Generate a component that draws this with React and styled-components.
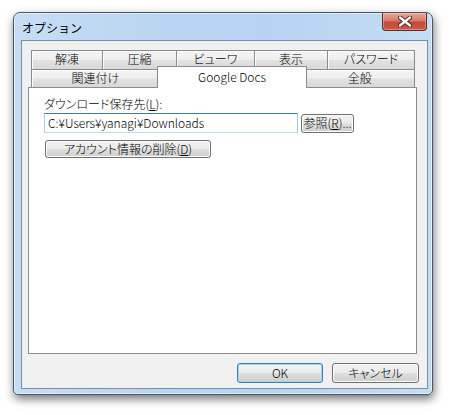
import React from "react";
import styled, { createGlobalStyle } from "styled-components";

const JP = `"Noto Sans CJK JP", sans-serif`;

const GlobalStyle = createGlobalStyle`
  html, body {
    margin: 0;
    background: #ffffff;
    font-family: ${JP};
    font-size: 12px;
  }
`;

const Page = styled.div`
  padding: 12px 0 0 13px;
  height: 415px;
  box-sizing: border-box;
`;

// aero glass frame
const Window = styled.div`
  width: 420px;
  height: 383px;
  box-sizing: border-box;
  border: 1px solid #44566a;
  border-radius: 7px 7px 5px 5px;
  background: linear-gradient(90deg, #c6ddf4 0%, #bad5f1 35%, #b7d3f1 60%, #c4dcf4 100%);
  box-shadow: 1px 4px 10px rgba(0, 0, 0, 0.55), inset 0 0 0 1px rgba(255, 255, 255, 0.55);
  display: flex;
  flex-direction: column;
  padding: 0 4px 5px 7px;
`;

const TitleBar = styled.div`
  height: 27px;
  display: flex;
  justify-content: space-between;
  align-items: flex-start;
`;

const Title = styled.div`
  font-size: 12px;
  line-height: 14px;
  padding: 8px 0 0 1px;
  color: #000;
`;

const CloseButton = styled.div`
  width: 45px;
  height: 18px;
  margin-right: 1px;
  box-sizing: border-box;
  border: 1px solid #5a2a24;
  border-top: none;
  border-radius: 0 0 4px 4px;
  background: linear-gradient(#e9a99a 0%, #d97a68 45%, #c24a38 55%, #c9594a 100%);
  box-shadow: inset 0 0 0 1px rgba(255, 200, 190, 0.45);
  display: flex;
  align-items: center;
  justify-content: center;
`;

// dialog body: light weight, proportional kana
const Client = styled.div`
  flex: 1;
  border: 1px solid #7c8ea2;
  background: #f0f0f0;
  display: flex;
  flex-direction: column;
  padding: 9px 0 0 6px;
  font-weight: 300;
  font-feature-settings: "palt";
  color: #000;
`;

const Tabs = styled.div`
  width: 384px;
  margin-left: 3px;
  display: flex;
  flex-direction: column;
`;

const TabRow = styled.div`
  display: flex;
  margin-top: ${(p) => (p.$first ? 0 : -1)}px;
`;

const Tab = styled.div`
  width: ${(p) => p.$w}px;
  height: ${(p) => (p.$first ? 20 : 19)}px;
  box-sizing: border-box;
  border: 1px solid #898c95;
  margin-left: ${(p) => (p.$lead ? 0 : -1)}px;
  background: linear-gradient(#f4f4f4 0%, #eeeeee 48%, #e2e2e2 52%, #d8d8d8 100%);
  box-shadow: inset 1px 1px 0 #fcfcfc;
  line-height: 16px;
  text-align: center;
`;

const ActiveTab = styled.div`
  position: relative;
  z-index: 2;
  width: 151px;
  height: 22px;
  margin: -3px -2px -2px -3px;
  box-sizing: border-box;
  border: 1px solid #898c95;
  border-bottom: none;
  background: #ffffff;
  line-height: 14px;
  padding-top: 3px;
  text-align: center;
`;

const Panel = styled.div`
  width: 389px;
  height: 267px;
  box-sizing: border-box;
  margin-top: -1px;
  border: 1px solid #898c95;
  background: #ffffff;
  padding: 9px 0 0 15px;
  display: flex;
  flex-direction: column;
`;

const Label = styled.div`
  line-height: 14px;
`;

const Key = styled.span`
  text-decoration: underline;
  text-underline-offset: 1px;
`;

const PathRow = styled.div`
  display: flex;
  align-items: flex-start;
  gap: 3px;
  margin-top: 2px;
`;

const TextBox = styled.div`
  width: 254px;
  height: 20px;
  box-sizing: border-box;
  border: 1px solid #b7d9ed;
  border-top-color: #3d7bad;
  border-left-color: #a4c9e3;
  border-right-color: #a4c9e3;
  padding: 2px 0 0 3px;
  line-height: 14px;
`;

const Button = styled.div`
  width: ${(p) => p.$w}px;
  height: ${(p) => p.$h || 19}px;
  margin-top: ${(p) => p.$top || 0}px;
  margin-left: ${(p) => p.$left || 0}px;
  box-sizing: border-box;
  border: 1px solid ${(p) => (p.$default ? "#3c7fb1" : "#707070")};
  border-radius: 3px;
  background: linear-gradient(#f2f2f2 0%, #ebebeb 48%, #dddddd 52%, #cfcfcf 100%);
  box-shadow: inset 0 0 0 1px ${(p) => (p.$default ? "#9fd5f3" : "#fbfbfb")};
  line-height: ${(p) => (p.$h || 19) - 3}px;
  text-align: center;
  white-space: nowrap;
`;

const Footer = styled.div`
  display: flex;
  justify-content: flex-end;
  gap: 9px;
  margin-top: 9px;
  padding-right: 8px;
`;

function CloseGlyph() {
  return (
    <svg width="14" height="11" viewBox="0 0 14 11">
      <path
        d="M2 1.5 L12 9.5 M12 1.5 L2 9.5"
        stroke="#4a1f1a"
        strokeWidth="4.2"
        strokeLinecap="round"
        fill="none"
      />
      <path
        d="M2 1.5 L12 9.5 M12 1.5 L2 9.5"
        stroke="#ffffff"
        strokeWidth="2.4"
        strokeLinecap="round"
        fill="none"
      />
    </svg>
  );
}

const topTabs = [
  { label: "解凍", w: 72 },
  { label: "圧縮", w: 75 },
  { label: "ビューワ", w: 79 },
  { label: "表示", w: 74 },
  { label: "パスワード", w: 88 },
];

export default function App() {
  return (
    <>
      <GlobalStyle />
      <Page>
        <Window>
          <TitleBar>
            <Title>オプション</Title>
            <CloseButton>
              <CloseGlyph />
            </CloseButton>
          </TitleBar>
          <Client>
            <Tabs>
              <TabRow $first>
                {topTabs.map((t, i) => (
                  <Tab key={t.label} $w={t.w} $lead={i === 0} $first>
                    {t.label}
                  </Tab>
                ))}
              </TabRow>
              <TabRow>
                <Tab $w={129} $lead>
                  関連付け
                </Tab>
                <ActiveTab>Google Docs</ActiveTab>
                <Tab $w={111}>全般</Tab>
              </TabRow>
            </Tabs>
            <Panel>
              <Label>
                ダウンロード保存先(<Key>L</Key>):
              </Label>
              <PathRow>
                <TextBox>C:¥Users¥yanagi¥Downloads</TextBox>
                <Button $w={53} $h={19} $top={1}>
                  参照(<Key>R</Key>)...
                </Button>
              </PathRow>
              <Button $w={166} $h={18} $top={7} $left={1}>
                アカウント情報の削除(<Key>D</Key>)
              </Button>
            </Panel>
            <Footer>
              <Button $w={86} $h={20} $default>
                OK
              </Button>
              <Button $w={87} $h={20}>
                キャンセル
              </Button>
            </Footer>
          </Client>
        </Window>
      </Page>
    </>
  );
}
